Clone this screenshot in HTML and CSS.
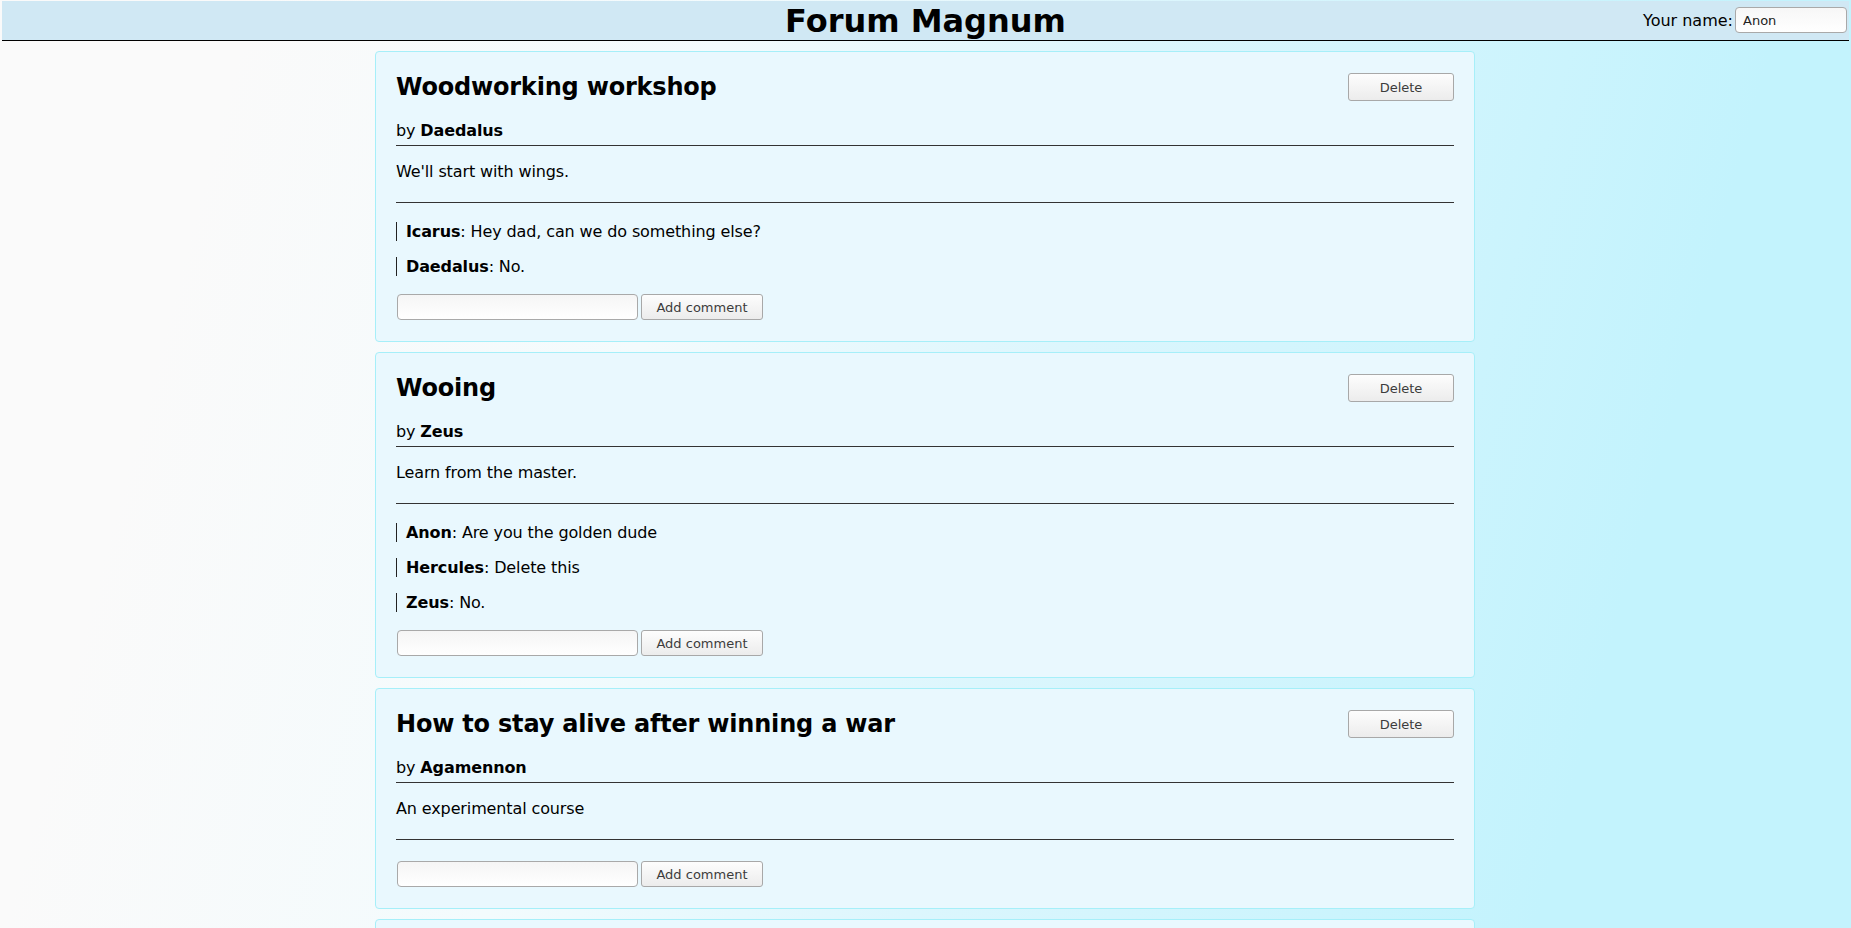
FILE: index.html
```html
<!DOCTYPE html>
<html lang="en">
<head>
<meta charset="utf-8">
<title>Forum Magnum</title>
<link rel="stylesheet" href="styles.css">
</head>
<body>
<header class="topbar">
  <h1 class="site-title">Forum Magnum</h1>
  <label class="name-field">Your name:<input class="name-input" type="text" value="Anon"></label>
</header>
<main class="posts">
  <article class="post">
    <div class="post-head">
      <h2 class="post-title">Woodworking workshop</h2>
      <button class="btn btn-delete">Delete</button>
    </div>
    <div class="post-author">by <b>Daedalus</b></div>
    <div class="post-body">We'll start with wings.</div>
    <div class="comments">
      <div class="comment"><b>Icarus</b>: Hey dad, can we do something else?</div>
      <div class="comment"><b>Daedalus</b>: No.</div>
    </div>
    <form class="comment-form"><input class="comment-input" type="text"><button type="button" class="btn btn-add">Add comment</button></form>
  </article>
  <article class="post">
    <div class="post-head">
      <h2 class="post-title">Wooing</h2>
      <button class="btn btn-delete">Delete</button>
    </div>
    <div class="post-author">by <b>Zeus</b></div>
    <div class="post-body">Learn from the master.</div>
    <div class="comments">
      <div class="comment"><b>Anon</b>: Are you the golden dude</div>
      <div class="comment"><b>Hercules</b>: Delete this</div>
      <div class="comment"><b>Zeus</b>: No.</div>
    </div>
    <form class="comment-form"><input class="comment-input" type="text"><button type="button" class="btn btn-add">Add comment</button></form>
  </article>
  <article class="post">
    <div class="post-head">
      <h2 class="post-title">How to stay alive after winning a war</h2>
      <button class="btn btn-delete">Delete</button>
    </div>
    <div class="post-author">by <b>Agamennon</b></div>
    <div class="post-body">An experimental course</div>
    <div class="comments"></div>
    <form class="comment-form"><input class="comment-input" type="text"><button type="button" class="btn btn-add">Add comment</button></form>
  </article>
  <article class="post">
    <div class="post-head">
      <h2 class="post-title">Labours for hire</h2>
      <button class="btn btn-delete">Delete</button>
    </div>
    <div class="post-author">by <b>Hercules</b></div>
    <div class="post-body">Twelve tasks, no questions asked.</div>
    <div class="comments"></div>
    <form class="comment-form"><input class="comment-input" type="text"><button type="button" class="btn btn-add">Add comment</button></form>
  </article>
</main>
</body>
</html>
```

FILE: styles.css
```css
html {
  min-height: 100%;
}
body {
  margin: 0;
  padding: 0 0 10px;
  font-family: "DejaVu Sans", "Liberation Sans", sans-serif;
  font-size: 16px;
  color: #000;
  background: linear-gradient(105deg, #fafafa 12%, #f3fbfd 35%, #dcf6fd 55%, #c3f3fd 85%) fixed;
}
.topbar {
  position: relative;
  margin: 1px 2px 0;
  padding: 1px 0 0;
  background: #d0e8f4;
  border-bottom: 1px solid #000;
  text-align: center;
}
.site-title {
  margin: 0;
  font-size: 32px;
  font-weight: bold;
  line-height: normal;
}
.name-field {
  position: absolute;
  right: 2px;
  top: 6px;
  display: flex;
  align-items: center;
  gap: 2px;
  font-size: 16px;
}
.name-input {
  width: 112px;
  height: 26px;
  box-sizing: border-box;
  padding: 2px 7px;
  border: 1px solid #a9a9a9;
  border-radius: 4px;
  background: linear-gradient(#f7f7f7, #ffffff);
  font-family: "DejaVu Sans", sans-serif;
  font-size: 13px;
  color: #222;
}
.posts {
  width: 1100px;
  padding-right: 1px;
  margin: 10px auto 0;
  display: flex;
  flex-direction: column;
  gap: 10px;
}
.post {
  box-sizing: border-box;
  background: #e9f8fe;
  border: 1px solid #a6eff9;
  border-radius: 4px;
  padding: 20px;
  letter-spacing: -0.12px;
}
.post-head {
  display: flex;
  justify-content: space-between;
  align-items: flex-start;
}
.post-title {
  margin: 1px 0 0;
  font-size: 24px;
  font-weight: bold;
  line-height: 28px;
  letter-spacing: -0.2px;
}
.btn {
  box-sizing: border-box;
  border: 1px solid #a8a8a8;
  border-radius: 3px;
  background: linear-gradient(#fdfdfd, #ececec);
  font-family: "DejaVu Sans", sans-serif;
  font-size: 13px;
  color: #3c3c3c;
  padding: 0 8px;
  letter-spacing: 0;
}
.btn-delete {
  width: 106px;
  height: 28px;
  margin-top: 1px;
}
.post-author {
  margin-top: 20px;
  padding-bottom: 5px;
  border-bottom: 1px solid #333;
}
.post-body {
  margin-top: 16px;
  padding-bottom: 21px;
  border-bottom: 1px solid #333;
}
.comments {
  display: flex;
  flex-direction: column;
  gap: 16px;
  padding-top: 19px;
}
.comments:empty {
  padding-top: 3px;
}
.comment {
  border-left: 1px solid #222;
  padding-left: 9px;
}
.comment-form {
  display: flex;
  gap: 3px;
  margin: 18px 0 1px;
}
.comment-input {
  width: 241px;
  height: 26px;
  box-sizing: border-box;
  margin: 0 0 0 1px;
  border: 1px solid #a9a9a9;
  border-radius: 4px;
  background: linear-gradient(#f5f5f5, #ffffff);
}
.btn-add {
  width: 122px;
  height: 26px;
}
```
